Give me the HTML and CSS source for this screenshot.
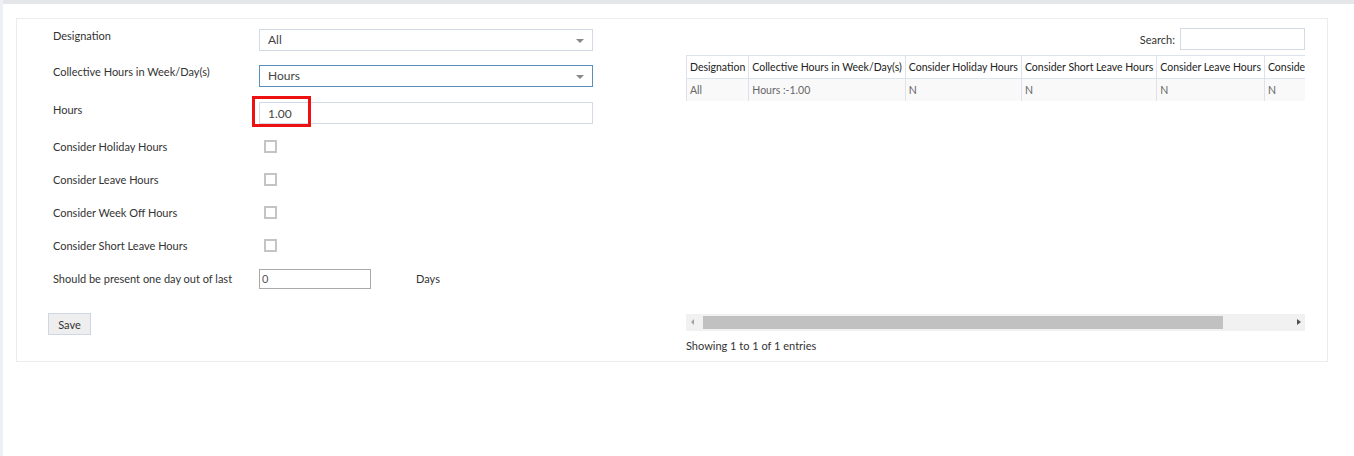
FILE: index.html
```html
<!DOCTYPE html>
<html>
<head>
    <title>Collective Hours Setup</title>
    <link rel="stylesheet" href="styles.css">
</head>
<body>
    <div class="page">
        <div class="panel">
            <!-- Left: settings form -->
            <div class="form-col">
                <div class="form-row row-1">
                    <label class="lbl">Designation</label>
                    <div class="select">All<span class="caret"></span></div>
                </div>
                <div class="form-row row-2">
                    <label class="lbl">Collective Hours in Week/Day(s)</label>
                    <div class="select focused">Hours<span class="caret"></span></div>
                </div>
                <div class="form-row row-3">
                    <label class="lbl">Hours</label>
                    <div class="field-wrap">
                        <input class="text-input" type="text" value="1.00">
                        <div class="mark"></div>
                    </div>
                </div>
                <div class="form-row check-row">
                    <label class="lbl">Consider Holiday Hours</label>
                    <span class="check"></span>
                </div>
                <div class="form-row check-row">
                    <label class="lbl">Consider Leave Hours</label>
                    <span class="check"></span>
                </div>
                <div class="form-row check-row">
                    <label class="lbl">Consider Week Off Hours</label>
                    <span class="check"></span>
                </div>
                <div class="form-row check-row">
                    <label class="lbl">Consider Short Leave Hours</label>
                    <span class="check"></span>
                </div>
                <div class="form-row check-row">
                    <label class="lbl">Should be present one day out of last</label>
                    <input class="days-input" type="text" value="0">
                    <span class="days">Days</span>
                </div>
                <button class="btn-save">Save</button>
            </div>

            <!-- Right: data table -->
            <div class="table-col">
                <div class="search-row">
                    <span>Search:</span>
                    <input class="search-input" type="text">
                </div>
                <div class="table-scroll">
                    <table class="grid">
                        <thead>
                            <tr>
                                <th>Designation</th>
                                <th>Collective Hours in Week/Day(s)</th>
                                <th>Consider Holiday Hours</th>
                                <th>Consider Short Leave Hours</th>
                                <th>Consider Leave Hours</th>
                                <th>Consider Week Off Hours</th>
                            </tr>
                        </thead>
                        <tbody>
                            <tr>
                                <td>All</td>
                                <td>Hours :-1.00</td>
                                <td>N</td>
                                <td>N</td>
                                <td>N</td>
                                <td>N</td>
                            </tr>
                        </tbody>
                    </table>
                </div>
                <div class="hscroll">
                    <span class="arr arr-left"></span>
                    <div class="hscroll-track"><div class="thumb"></div></div>
                    <span class="arr arr-right"></span>
                </div>
                <div class="info">Showing 1 to 1 of 1 entries</div>
            </div>
        </div>
    </div>
</body>
</html>
```

FILE: styles.css
```css
body {
    margin: 0;
    padding: 0;
    background-color: #edf0f5;
    font-family: Lato, "Open Sans", sans-serif;
    font-size: 11px;
    color: #333;
}

.page {
    margin-left: 3px;
    width: 1338px;
    height: 452px;
    background: #fff;
    border-top: 4px solid #e5e6e9;
    padding: 14px 0 0 13px;
    box-sizing: content-box;
}

/* Bordered box holding form + table */
.panel {
    width: 1312px;
    height: 344px;
    border: 1px solid #ececec;
    display: flex;
    justify-content: space-between;
    padding: 9px 22px 0 0;
    box-sizing: border-box;
}

/* Form column */
.form-col {
    width: 576px;
    padding-left: 31px;
    padding-top: 1px;
    box-sizing: border-box;
}

.form-row {
    display: flex;
    align-items: flex-start;
}

.row-1 { height: 36px; }
.row-2 { height: 37px; }
.row-3 { height: 28px; }

.check-row {
    height: 33px;
    align-items: center;
}

.lbl {
    width: 211px;
    flex: 0 0 211px;
    padding-left: 5px;
    box-sizing: border-box;
    line-height: 14px;
}

.row-3 .lbl {
    padding-top: 1px;
}

.select {
    width: 334px;
    height: 22px;
    border: 1px solid #d3dae5;
    box-sizing: border-box;
    padding-left: 8px;
    font-size: 12px;
    line-height: 20px;
    color: #444;
    position: relative;
}

.select.focused {
    border-color: #5a8fbd;
}

.caret {
    position: absolute;
    right: 8px;
    top: 9px;
    border-left: 4px solid transparent;
    border-right: 4px solid transparent;
    border-top: 4px solid #888;
}

.field-wrap {
    position: relative;
}

.text-input {
    width: 334px;
    height: 22px;
    border: 1px solid #d3dae5;
    box-sizing: border-box;
    padding: 0 0 0 8px;
    margin: 0;
    font-family: Lato, sans-serif;
    font-size: 12px;
    color: #444;
    display: block;
}

/* red highlight drawn over the Hours value */
.mark {
    position: absolute;
    left: -7px;
    top: -6px;
    width: 59px;
    height: 31px;
    border: 3px solid #ee1111;
    box-sizing: border-box;
}

.check {
    width: 13px;
    height: 13px;
    border: 2px solid #c4c4c4;
    box-sizing: border-box;
    margin-left: 5px;
    background: #fff;
}

.days-input {
    width: 112px;
    height: 20px;
    border: 1px solid #a9a9a9;
    box-sizing: border-box;
    padding: 0 0 0 2px;
    margin: 0;
    font-family: Lato, sans-serif;
    font-size: 11px;
    color: #555;
}

.days {
    margin-left: 45px;
}

.btn-save {
    margin-top: 18px;
    width: 43px;
    height: 22px;
    background: #eeeeee;
    border: 1px solid #cdd7e5;
    font-family: Lato, sans-serif;
    font-size: 11px;
    color: #333;
    padding: 0;
}

/* Table column */
.table-col {
    width: 619px;
}

.search-row {
    display: flex;
    justify-content: flex-end;
    align-items: center;
    gap: 5px;
    height: 22px;
}

.search-input {
    width: 125px;
    height: 22px;
    border: 1px solid #d3dae5;
    box-sizing: border-box;
    margin: 0;
}

.table-scroll {
    margin-top: 5px;
    height: 259px;
    overflow: hidden;
}

.grid {
    border-collapse: collapse;
    white-space: nowrap;
    font-size: 10.5px;
}

.grid th,
.grid td {
    padding: 0 3px;
    height: 22px;
    text-align: left;
    border-left: 1px solid #dde3ec;
    border-right: 1px solid #dde3ec;
}

.grid th {
    font-weight: normal;
    color: #222;
    border-top: 1px solid #dde3ec;
    border-bottom: 1px solid #dde3ec;
}

.grid td {
    background: #f9f9f9;
    color: #666;
}

/* drawn horizontal scrollbar */
.hscroll {
    height: 17px;
    background: #f1f1f1;
    display: flex;
    align-items: center;
}

.arr {
    width: 17px;
    flex: 0 0 17px;
    height: 17px;
    position: relative;
}

.arr::after {
    content: "";
    position: absolute;
    top: 5px;
    border-top: 3px solid transparent;
    border-bottom: 3px solid transparent;
}

.arr-left::after {
    left: 5px;
    border-right: 3px solid #a3a3a3;
}

.arr-right::after {
    left: 9px;
    border-left: 4px solid #505050;
}

.hscroll-track {
    flex: 1;
    height: 13px;
}

.thumb {
    width: 520px;
    height: 13px;
    background: #c1c1c1;
}

.info {
    margin-top: 8px;
    line-height: 14px;
}
```
